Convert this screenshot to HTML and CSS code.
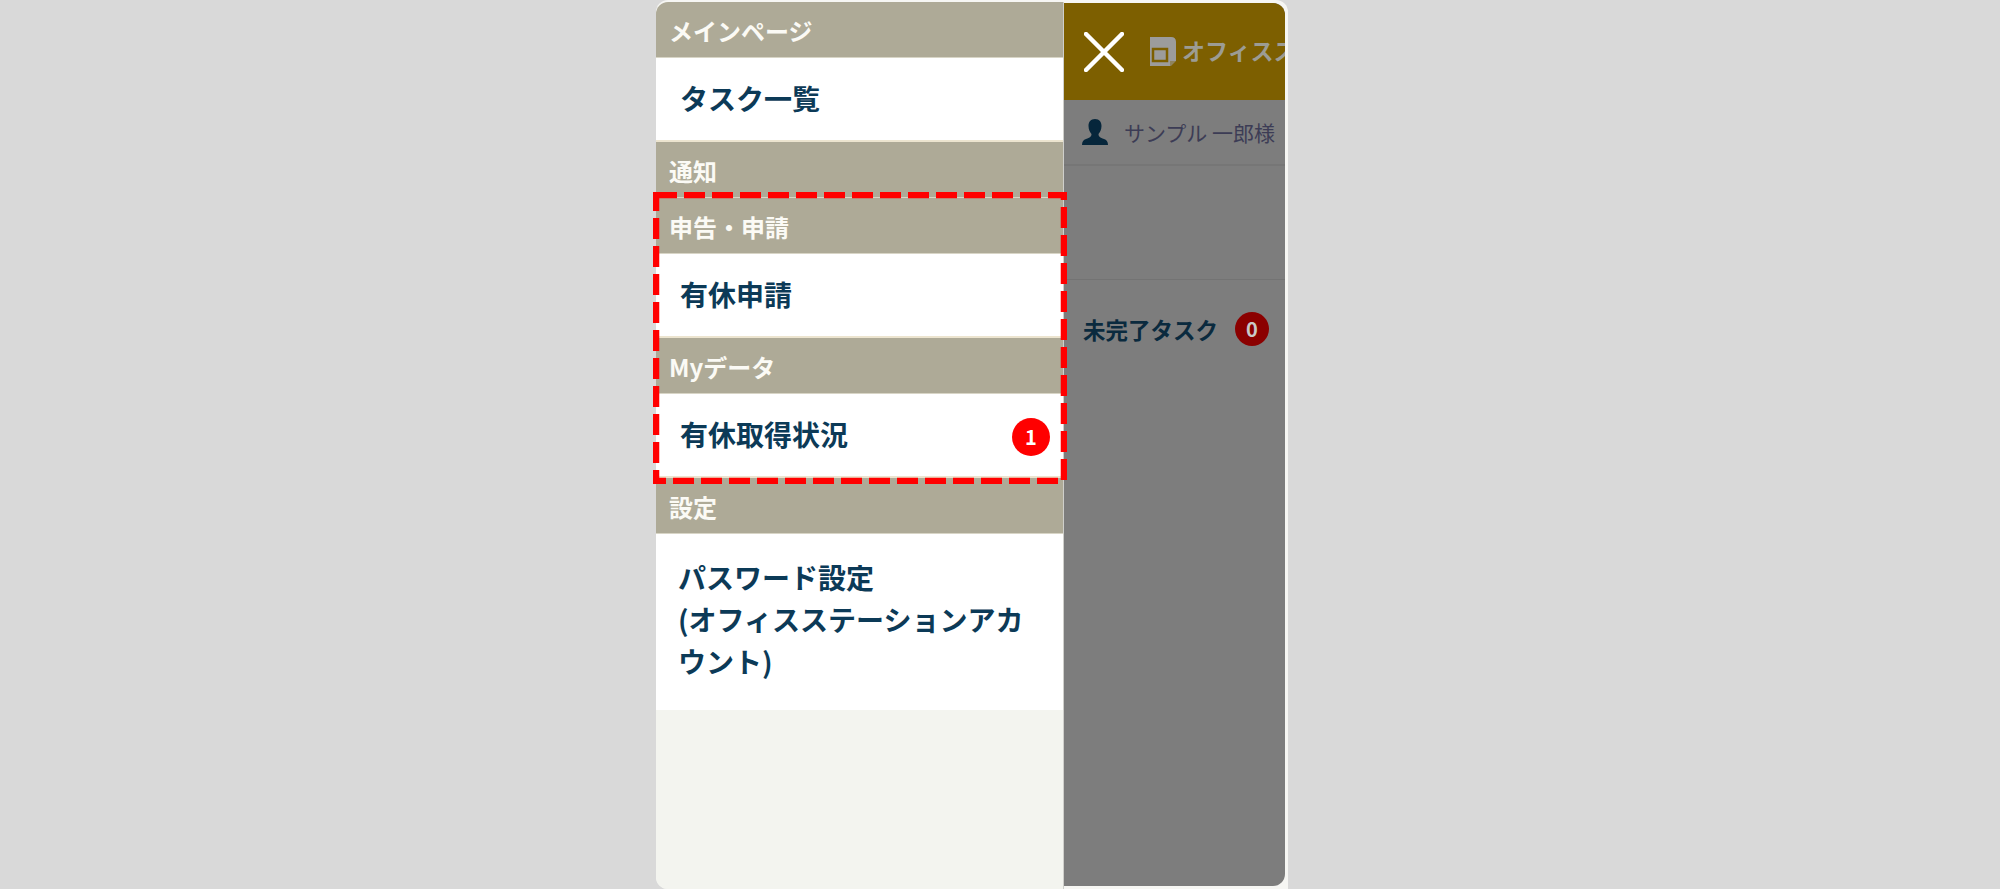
FILE: index.html
```html
<!DOCTYPE html>
<html lang="ja">
<head>
    <meta charset="UTF-8">
    <title>メニュー</title>
    <link rel="stylesheet" href="styles.css">
</head>
<body>
    <div class="phone">
        <nav class="nav">
            <div class="nav-head">メインページ</div>
            <a class="nav-item">タスク一覧</a>
            <div class="nav-head">通知</div>
            <div class="nav-head">申告・申請</div>
            <a class="nav-item">有休申請</a>
            <div class="nav-head">Myデータ</div>
            <a class="nav-item">有休取得状況<span class="badge">1</span></a>
            <div class="nav-head">設定</div>
            <a class="nav-item nav-item-long">パスワード設定<br>(オフィスステーションアカウント)</a>
        </nav>

        <main class="main">
            <header class="topbar">
                <svg class="close-icon" viewBox="0 0 40 40" width="40" height="40">
                    <path d="M2 2L38 38M38 2L2 38" stroke="#fff" stroke-width="4.500" stroke-linecap="round"/>
                </svg>
                <svg class="logo-icon" viewBox="0 0 26 30" width="26" height="30">
                    <path d="M0 0H21Q26 0 26 5V24L20 24V29H0Z" fill="#9c9c9c"/>
                    <path d="M3 12H17V24H3Z" fill="none" stroke="#7d5f00" stroke-width="2.500"/>
                    <path d="M20 24H26L21 29H20Z" fill="#9c9c9c" opacity="0.600"/>
                </svg>
                <span class="logo-text">オフィスステーション</span>
            </header>
            <div class="user-row">
                <svg class="user-icon" viewBox="0 0 26 26" width="26" height="26">
                    <path d="M13 0C8.500 0 6.500 3 6.500 7C6.500 10.500 8 13.500 9.500 15C9.500 17.500 8 18.500 4 20C1.500 21 0 22.500 0 26H26C26 22.500 24.500 21 22 20C18 18.500 16.500 17.500 16.500 15C18 13.500 19.500 10.500 19.500 7C19.500 3 17.500 0 13 0Z" fill="#06263b"/>
                </svg>
                <span class="user-name">サンプル 一郎様</span>
            </div>
            <div class="blank-row"></div>
            <div class="task-row">
                <span class="task-label">未完了タスク</span>
                <span class="task-badge">0</span>
            </div>
        </main>

        <svg class="highlight" width="414" height="292" viewBox="0 0 414 292">
            <rect x="3" y="3" width="408" height="286" fill="none" stroke="#f00" stroke-width="6.500" stroke-dasharray="21 7"/>
        </svg>
    </div>
</body>
</html>
```

FILE: styles.css
```css
* {
    box-sizing: border-box;
}

body {
    margin: 0;
    height: 889px;
    overflow: hidden;
    background: #d9d9d9;
    font-family: "Noto Sans CJK JP", "Noto Sans", sans-serif;
}

.phone {
    position: relative;
    display: flex;
    width: 632px;
    height: 889px;
    margin-left: 656px;
    padding: 2px 3px 0 0;
    background: #f6f6f3;
    border-radius: 12px 12px 0 12px;
}

.nav {
    width: 408px;
    height: 887px;
    background: #f3f4ef;
    border-right: 1px solid #cfcfcb;
    border-radius: 12px 0 0 12px;
    overflow: hidden;
}

.nav-head {
    height: 56px;
    padding-left: 13px;
    background: #aeaa97;
    color: #fbfaf5;
    font-size: 24px;
    font-weight: 700;
    line-height: 58px;
    border-bottom: 1px solid #d8d5c6;
}

.nav-item {
    position: relative;
    display: block;
    height: 84px;
    padding-left: 24px;
    background: #fff;
    color: #0c3a57;
    font-size: 28px;
    font-weight: 700;
    line-height: 81px;
    border-bottom: 2px solid #ece4cf;
}

.nav-item-long {
    height: 176px;
    padding: 22px 20px 0 22px;
    line-height: 42px;
    border-bottom: 0;
}

.badge {
    position: absolute;
    top: 24px;
    right: 13px;
    width: 38px;
    height: 38px;
    border-radius: 50%;
    background: #f00;
    color: #fff;
    font-size: 20px;
    font-weight: 700;
    line-height: 38px;
    text-align: center;
}

.main {
    flex: 1;
    height: 883px;
    margin-top: 1px;
    background: #7d7d7d;
    border-radius: 0 12px 12px 0;
    overflow: hidden;
}

.topbar {
    display: flex;
    align-items: center;
    height: 97px;
    padding-left: 20px;
    background: #7d5f00;
    white-space: nowrap;
    overflow: hidden;
}

.close-icon {
    flex: none;
    margin-right: 26px;
}

.logo-icon {
    flex: none;
    margin-right: 6px;
}

.logo-text {
    margin-bottom: 4px;
    color: #9c9c94;
    font-size: 23px;
    font-weight: 700;
}

.user-row {
    display: flex;
    align-items: center;
    gap: 16px;
    height: 66px;
    padding-left: 18px;
    border-bottom: 2px solid #767676;
}

.user-icon {
    flex: none;
}

.user-name {
    color: #3c3c55;
    font-size: 21px;
    white-space: nowrap;
}

.blank-row {
    height: 114px;
    border-bottom: 1px solid #737373;
}

.task-row {
    display: flex;
    align-items: center;
    gap: 17px;
    height: 98px;
    padding-left: 19px;
}

.task-label {
    color: #0a2a3e;
    font-size: 22.500px;
    font-weight: 700;
}

.task-badge {
    width: 34px;
    height: 34px;
    border-radius: 50%;
    background: #8b0000;
    color: #c9c9c9;
    font-size: 20px;
    font-weight: 700;
    line-height: 34px;
    text-align: center;
}

.highlight {
    position: absolute;
    top: 192px;
    left: -3px;
}
```
